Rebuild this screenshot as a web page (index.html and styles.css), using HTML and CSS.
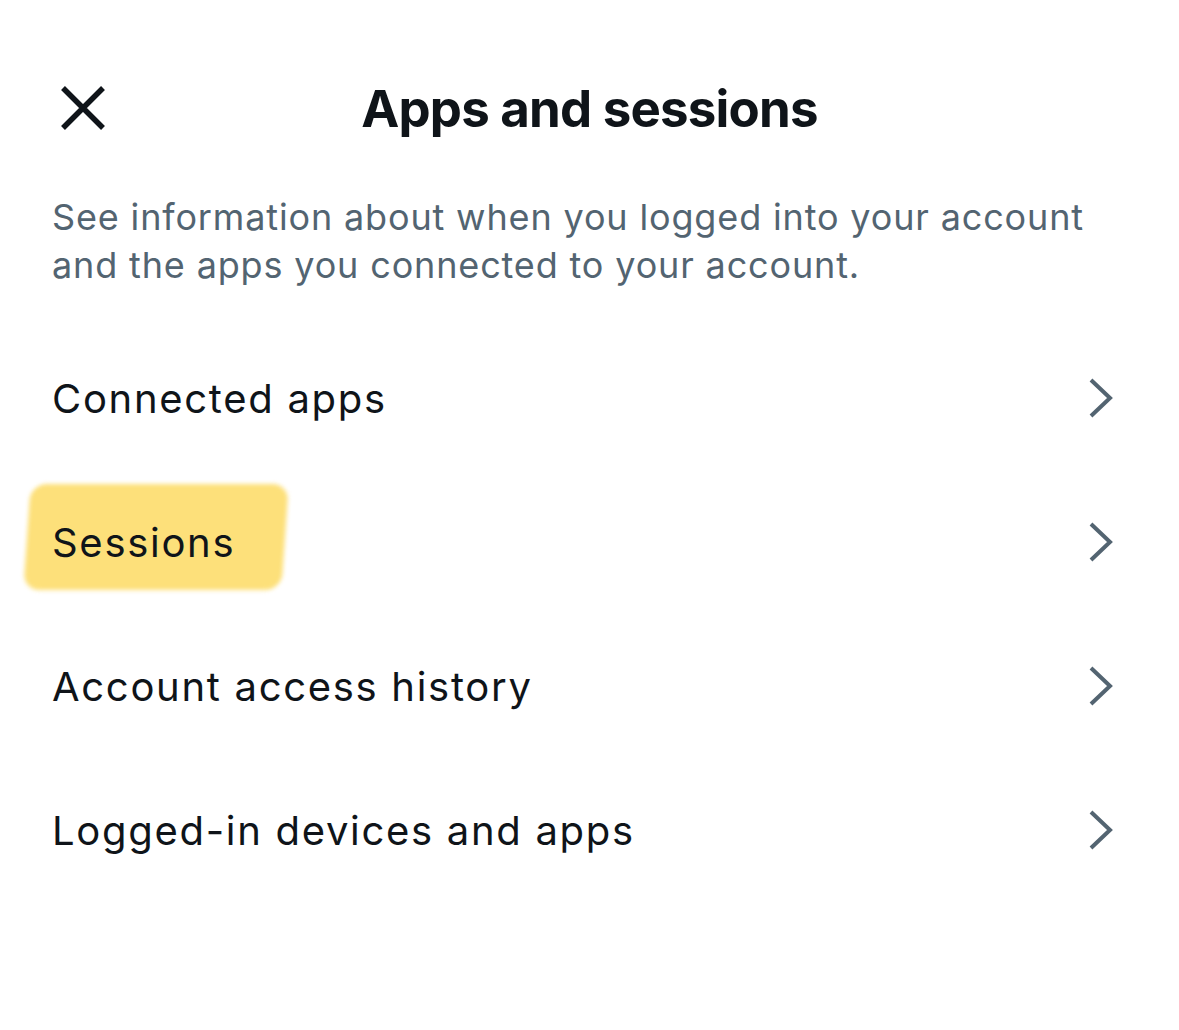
FILE: index.html
```html
<!DOCTYPE html>
<html lang="en">
<head>
    <meta charset="UTF-8">
    <meta name="viewport" content="width=device-width, initial-scale=1.0">
    <title>Apps and sessions</title>
    <link rel="stylesheet" href="styles.css">
</head>
<body>
    <div class="sheet">
        <div class="header">
            <button class="close-button" aria-label="Close">
                <svg width="46" height="46" viewBox="0 0 46 46">
                    <path d="M3 3 L43 43 M43 3 L3 43" stroke="#0f1419" stroke-width="5.5" fill="none"/>
                </svg>
            </button>
            <h1>Apps and sessions</h1>
            <div></div>
        </div>

        <p class="intro">See information about when you logged into your account and the apps you connected to your account.</p>

        <ul class="menu">
            <li class="menu-row">
                <span class="label">Connected apps</span>
                <svg class="chevron" width="26" height="40" viewBox="0 0 26 40">
                    <path d="M3 2 L22 20 L3 38" stroke="#536471" stroke-width="4" fill="none"/>
                </svg>
            </li>
            <li class="menu-row">
                <span class="label marked">Sessions</span>
                <svg class="chevron" width="26" height="40" viewBox="0 0 26 40">
                    <path d="M3 2 L22 20 L3 38" stroke="#536471" stroke-width="4" fill="none"/>
                </svg>
            </li>
            <li class="menu-row">
                <span class="label">Account access history</span>
                <svg class="chevron" width="26" height="40" viewBox="0 0 26 40">
                    <path d="M3 2 L22 20 L3 38" stroke="#536471" stroke-width="4" fill="none"/>
                </svg>
            </li>
            <li class="menu-row">
                <span class="label">Logged-in devices and apps</span>
                <svg class="chevron" width="26" height="40" viewBox="0 0 26 40">
                    <path d="M3 2 L22 20 L3 38" stroke="#536471" stroke-width="4" fill="none"/>
                </svg>
            </li>
        </ul>
    </div>
</body>
</html>
```

FILE: styles.css
```css
* {
    margin: 0;
    padding: 0;
    box-sizing: border-box;
}

body {
    font-family: Inter, "Liberation Sans", sans-serif;
    background: #ffffff;
    color: #0f1419;
}

.sheet {
    padding-top: 60px;
}

.header {
    display: grid;
    grid-template-columns: 1fr auto 1fr;
    align-items: center;
    height: 96px;
}

.close-button {
    background: none;
    border: none;
    width: 46px;
    height: 46px;
    margin-left: 60px;
    display: flex;
}

.header h1 {
    font-size: 51px;
    font-weight: 700;
    letter-spacing: -0.8px;
}

.intro {
    margin-top: 37px;
    padding: 0 80px 0 52px;
    font-size: 36px;
    line-height: 48px;
    letter-spacing: 0.85px;
    color: #536471;
}

.menu {
    list-style: none;
    margin-top: 37px;
}

.menu-row {
    height: 144px;
    display: flex;
    align-items: center;
    justify-content: space-between;
    padding: 0 65px 0 52px;
}

.label {
    font-size: 40px;
    letter-spacing: 1.7px;
    position: relative;
}

/* hand-drawn marker stroke behind a label */
.label.marked::before {
    content: "";
    position: absolute;
    left: -25px;
    top: -34px;
    width: 258px;
    height: 106px;
    background: #fde07a;
    border-radius: 16px;
    transform: skewX(-4deg);
    filter: blur(2px);
    z-index: -1;
}

.label.marked {
    z-index: 0;
}
```
